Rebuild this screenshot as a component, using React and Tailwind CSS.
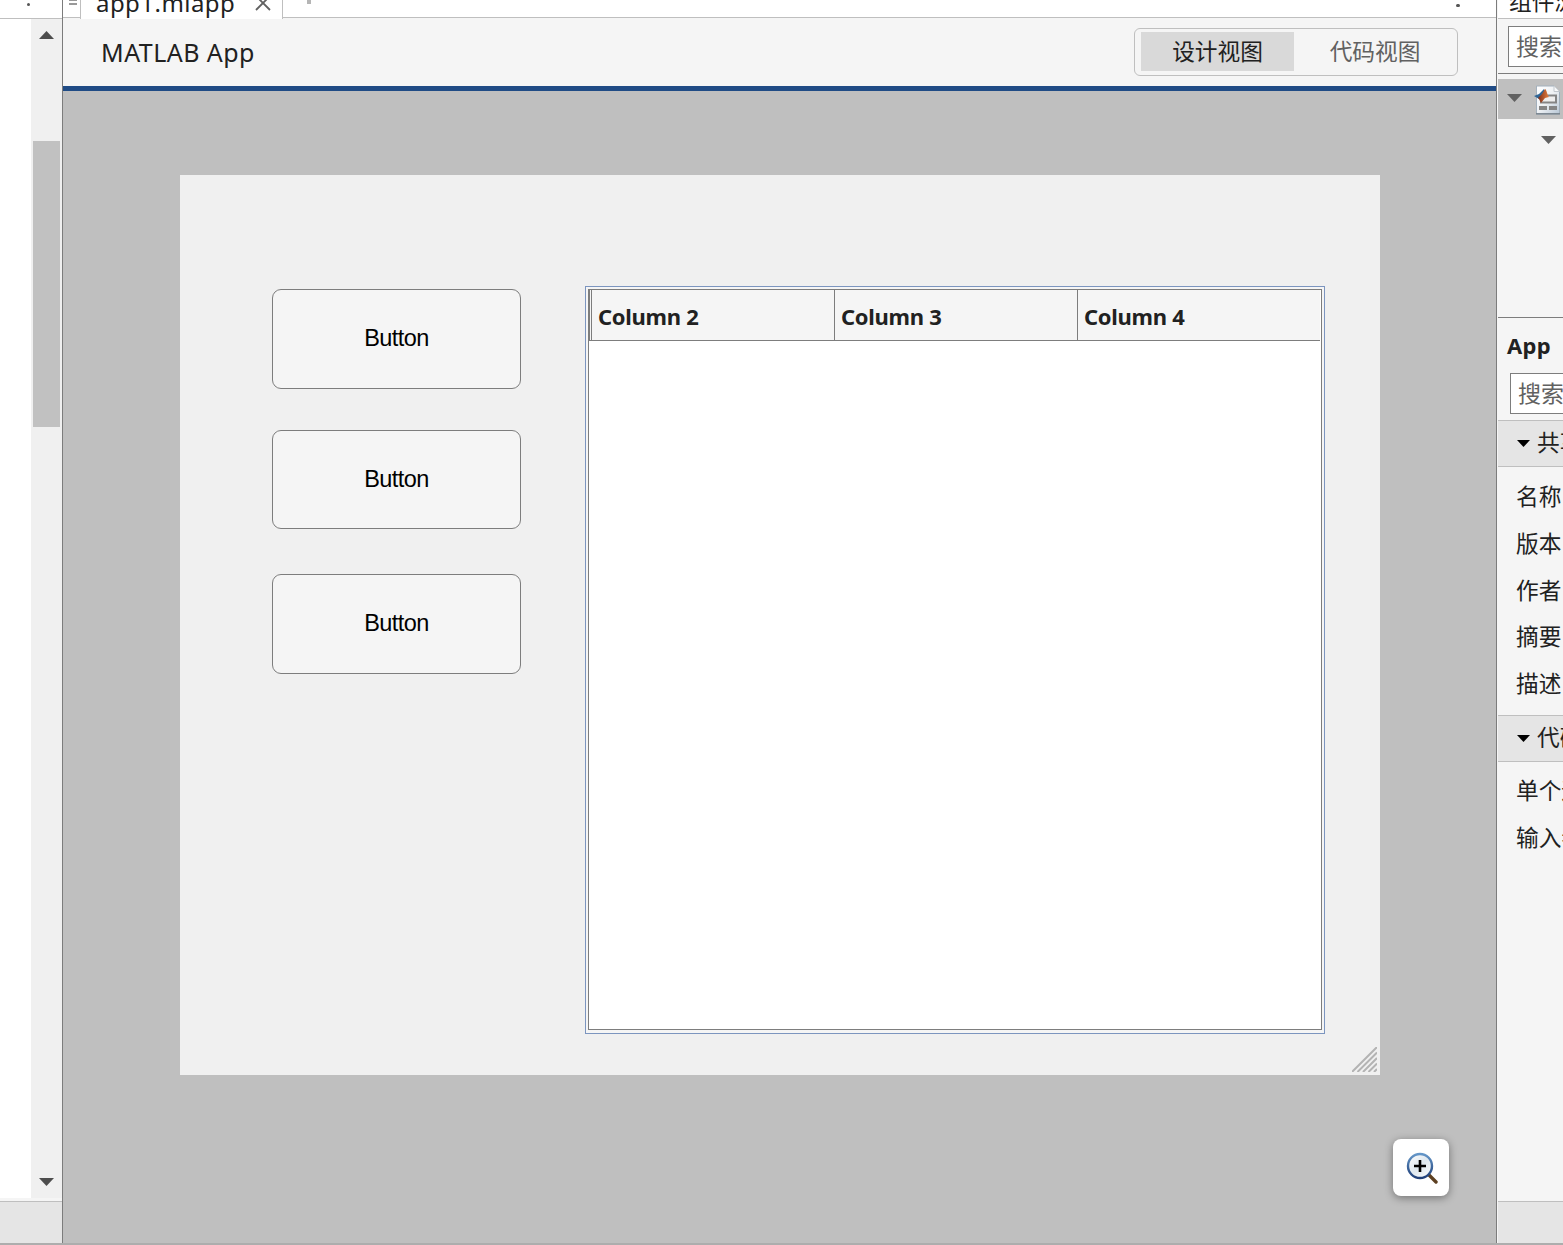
import React from "react";

const cjk = "font-['Noto_Sans','Noto_Sans_CJK_SC',sans-serif] whitespace-nowrap";

function Arrow({ className, up = false }) {
  return (
    <svg viewBox="0 0 16 8" className={className} fill="currentColor" preserveAspectRatio="none">
      <path d={up ? "M0 8 8 0 16 8Z" : "M0 0H16L8 8Z"} />
    </svg>
  );
}

function LeftPanel() {
  return (
    <aside className="flex w-[63px] shrink-0 flex-col border-r border-[#7c7c7c] bg-[#f5f5f5]">
      <div className="h-[19px] shrink-0 border-b border-[#bfbfbf] bg-white pl-[26.5px] pt-[2.5px]">
        <div className="size-[3.5px] rounded-full bg-[#555]" />
      </div>
      <div className="flex h-[1179px] shrink-0">
        <div className="w-[31px] bg-white" />
        <div className="flex w-[31px] flex-col bg-[#f0f0f0]">
          <Arrow up className="ml-2 mt-3 h-2 w-[15px] text-[#4d4d4d]" />
          <div className="ml-[2px] mt-[102px] h-[286px] w-[27px] bg-[#c1c1c1]" />
          <Arrow className="mb-[12px] ml-2 mt-auto h-2 w-[15px] text-[#4d4d4d]" />
        </div>
      </div>
      <div className="mt-[3px] flex-1 border-t border-[#bfbfbf] bg-[#e5e5e5]" />
    </aside>
  );
}

function TabStrip() {
  return (
    <div className="flex h-[18px] shrink-0 items-start bg-white">
      <div className="h-[18px] w-[17px] border-b border-[#bfbfbf] pl-[6px]">
        <div className="h-px w-2 bg-[#999]" />
        <div className="mt-[2px] h-[2px] w-2 bg-[#999]" />
      </div>
      <div className="relative z-10 flex h-[19px] w-[203px] border-x border-[#bfbfbf] bg-white">
        <div className="h-[19px] w-[172px] overflow-hidden pl-[15px]">
          <div className="-mt-[14px] whitespace-nowrap font-['Noto_Sans'] text-[24px] leading-[34px] tracking-[0.45px] text-[#212121]">
            app1.mlapp
          </div>
        </div>
        <svg className="-mt-[5px] ml-[2px] size-4" viewBox="0 0 16 16" fill="none" stroke="#616161" strokeWidth="1.8">
          <path d="M1 1 15 15M15 1 1 15" />
        </svg>
      </div>
      <div className="flex h-[18px] flex-1 border-b border-[#bfbfbf]">
        <div className="ml-[24px] h-1 w-1 bg-[#b5b5b5]" />
        <div className="ml-auto mr-[36.5px] mt-[3.5px] size-[3.5px] rounded-full bg-[#555]" />
      </div>
    </div>
  );
}

function Header() {
  return (
    <header className="flex h-[73px] shrink-0 justify-between border-b-[5px] border-[#1f4b85] bg-[#f5f5f5] pl-[38px] pr-[38px]">
      <h1 className="mt-[17px] whitespace-nowrap font-['Noto_Sans'] text-[25px] leading-[34px] tracking-[0.45px] text-[#212121]">
        MATLAB App
      </h1>
      <div className={"mt-[10px] flex h-12 w-[324px] rounded-md border border-[#bfbfbf] px-[6px] py-[3px] text-[22.7px] leading-[39px] " + cjk}>
        <button className="h-[39px] w-[153px] shrink-0 bg-[#d9d9d9] text-center text-[#212121]">设计视图</button>
        <button className="h-[39px] w-[162px] shrink-0 text-center text-[#616161]">代码视图</button>
      </div>
    </header>
  );
}

function CanvasButton({ className }) {
  return (
    <button
      className={
        "w-[249px] rounded-[9px] border border-[#7d7d7d] bg-[#f5f5f5] pb-[2px] text-center font-['Liberation_Sans'] text-[23.5px] leading-7 tracking-[-0.55px] text-black " +
        className
      }
    >
      Button
    </button>
  );
}

function Table() {
  return (
    <div className="h-[748px] w-[740px] border border-[#7c95bf] bg-[#f5f5f5] p-[2px]">
      <div className="flex h-[741px] w-[734px] flex-col border border-[#7d7d7d] bg-white">
        <div className="flex h-[51px] w-[731px] shrink-0 border-b border-[#7d7d7d] bg-[#f5f5f5] font-['Noto_Sans'] text-[22px] font-bold leading-[53px] tracking-[-0.28px] text-[#212121]">
          <div className="w-[3px] shrink-0 border-l border-r border-[#7d7d7d]" />
          <div className="w-[243px] shrink-0 border-r border-[#7d7d7d] pl-[6px]">Column 2</div>
          <div className="w-[243px] shrink-0 border-r border-[#7d7d7d] pl-[6px]">Column 3</div>
          <div className="w-[242px] shrink-0 pl-[6px]">Column 4</div>
        </div>
      </div>
    </div>
  );
}

function Canvas() {
  return (
    <main className="relative flex-1 bg-[#bfbfbf] pl-[117px] pt-[84px]">
      <div className="relative flex h-[900px] w-[1200px] bg-[#f0f0f0] pl-[92px] pt-[111px]">
        <div className="flex w-[249px] flex-col pt-[3px]">
          <CanvasButton className="h-[100px]" />
          <CanvasButton className="mt-[41px] h-[99px]" />
          <CanvasButton className="mt-[45px] h-[100px]" />
        </div>
        <div className="ml-[64px]">
          <Table />
        </div>
        <svg className="absolute bottom-[3px] right-[3px] size-[25px]" viewBox="0 0 25 25" stroke="#b3b3b3" strokeWidth="2">
          <path d="M0 25 25 0M5.5 25 25 5.5M11 25 25 11M16.5 25 25 16.5M22 25 25 22" />
        </svg>
      </div>
      <button className="absolute bottom-[47px] right-[47px] flex h-[57px] w-14 items-center justify-center rounded-lg bg-white shadow-[0_2px_8px_rgba(0,0,0,0.4)]">
        <svg className="ml-[2px] mt-[1px] size-8" viewBox="0 0 32 32" fill="none">
          <defs>
            <linearGradient id="rim" x1="0" y1="0" x2="0" y2="1">
              <stop stopColor="#6496c8" />
              <stop offset="1" stopColor="#1f3f78" />
            </linearGradient>
            <linearGradient id="glass" x1="0" y1="0" x2="1" y2="1">
              <stop stopColor="#fff" />
              <stop offset=".5" stopColor="#dfe8ef" />
              <stop offset="1" stopColor="#fff" />
            </linearGradient>
          </defs>
          <path d="M22.5 22.5 30 30" stroke="#5d4022" strokeWidth="3.4" strokeLinecap="round" />
          <circle cx="14" cy="14" r="12" fill="url(#glass)" stroke="url(#rim)" strokeWidth="2.4" />
          <path d="M8 14H20M14 8V20" stroke="#000" strokeWidth="2.6" />
        </svg>
      </button>
    </main>
  );
}

function AppIcon() {
  return (
    <svg className="h-[30px] w-[27px] shrink-0" viewBox="0 0 27 30">
      <defs>
        <linearGradient id="page" x1="0" y1="0" x2="1" y2="1">
          <stop stopColor="#fff" />
          <stop offset=".5" stopColor="#eef1f4" />
          <stop offset="1" stopColor="#b6c5d4" />
        </linearGradient>
        <linearGradient id="peak">
          <stop stopColor="#7c2d18" />
          <stop offset="1" stopColor="#e5803f" />
        </linearGradient>
      </defs>
      <path d="M2.5 1H20L25.5 6.5V29H2.5Z" fill="url(#page)" stroke="#a3b0bc" />
      <path d="M2 28.8H26" stroke="#77828c" strokeWidth="1.4" />
      <path d="M20 1V6.5H25.5" fill="#f8f8f8" stroke="#c2c8ce" />
      <rect x="7" y="10.5" width="15" height="7" fill="#eee" stroke="#858585" strokeWidth="2" />
      <path d="M5 21H13V25H5ZM15 21H23V25H15Z" fill="#858585" />
      <path d="m0 11 5-2 5-5 1 3-6 7Z" fill="#2f6595" />
      <path d="m4 13 4-4 3-5c2 1 2 6 4 8l-4 1-4 5-2-4Z" fill="url(#peak)" />
    </svg>
  );
}

function SearchBox({ className }) {
  return (
    <div className={"h-[41px] w-[140px] shrink-0 border border-[#7d7d7d] bg-white pl-[7px] text-[23px] leading-[38px] text-[#616161] " + className}>
      搜索
    </div>
  );
}

function Section({ title, rows, className, bodyClassName }) {
  return (
    <section className={className}>
      <div className="flex h-[47px] items-center border-y border-[#bfbfbf] bg-[#e5e5e5] pl-[19px]">
        <Arrow className="h-[7px] w-[13px] shrink-0 text-black" />
        <span className="ml-[7px]">{title}</span>
      </div>
      <div className={"pl-[18px] " + bodyClassName}>
        {rows.map((r) => (
          <div key={r} className="h-[46.8px] leading-[46px]">{r}</div>
        ))}
      </div>
    </section>
  );
}

function RightPanel() {
  return (
    <aside className="w-[67px] shrink-0 overflow-hidden border-l border-[#7c7c7c] bg-[#f5f5f5] pl-px">
      <div className={"flex h-full flex-col text-[22.7px] text-[#212121] " + cjk}>
        <div className="h-[19px] shrink-0 overflow-hidden border-b border-[#bfbfbf] bg-white pl-[11px]">
          <div className="-mt-[15px] leading-[34px]">组件浏览器</div>
        </div>
        <SearchBox className="ml-[10px] mt-[7px]" />
        <div className="mt-[6px] h-[245px] shrink-0 border-y border-[#7d7d7d] pt-[5px]">
          <div className="flex h-10 items-center bg-[#bfbfbf] pb-[2px] pl-[9px]">
            <Arrow className="h-2 w-[15px] shrink-0 text-[#616161]" />
            <div className="ml-[12px] mt-[3px]"><AppIcon /></div>
          </div>
          <div className="flex h-10 items-center pl-[43px] pt-px">
            <Arrow className="h-2 w-[15px] shrink-0 text-[#616161]" />
          </div>
        </div>
        <h2 className="mt-[10px] h-[34px] shrink-0 pl-[9px] text-[22px] font-bold leading-[34px] tracking-[0.3px]">App</h2>
        <SearchBox className="ml-[12px] mt-[11px]" />
        <Section
          className="mt-[6px] h-[295px] shrink-0"
          bodyClassName="pt-[7px]"
          title="共享"
          rows={["名称", "版本", "作者", "摘要", "描述"]}
        />
        <Section bodyClassName="pt-[6px]" title="代码选项" rows={["单个运行", "输入参数"]} />
        <div className="mt-auto h-[42px] shrink-0 border-t border-[#bfbfbf] bg-[#e5e5e5]" />
      </div>
    </aside>
  );
}

export default function App() {
  return (
    <div className="flex h-[1245px] w-[1563px] flex-col overflow-hidden">
      <div className="flex h-[1243px] shrink-0">
        <LeftPanel />
        <div className="flex w-[1433px] shrink-0 flex-col">
          <TabStrip />
          <Header />
          <Canvas />
        </div>
        <RightPanel />
      </div>
      <div className="h-[2px] bg-[#adadad]" />
    </div>
  );
}
